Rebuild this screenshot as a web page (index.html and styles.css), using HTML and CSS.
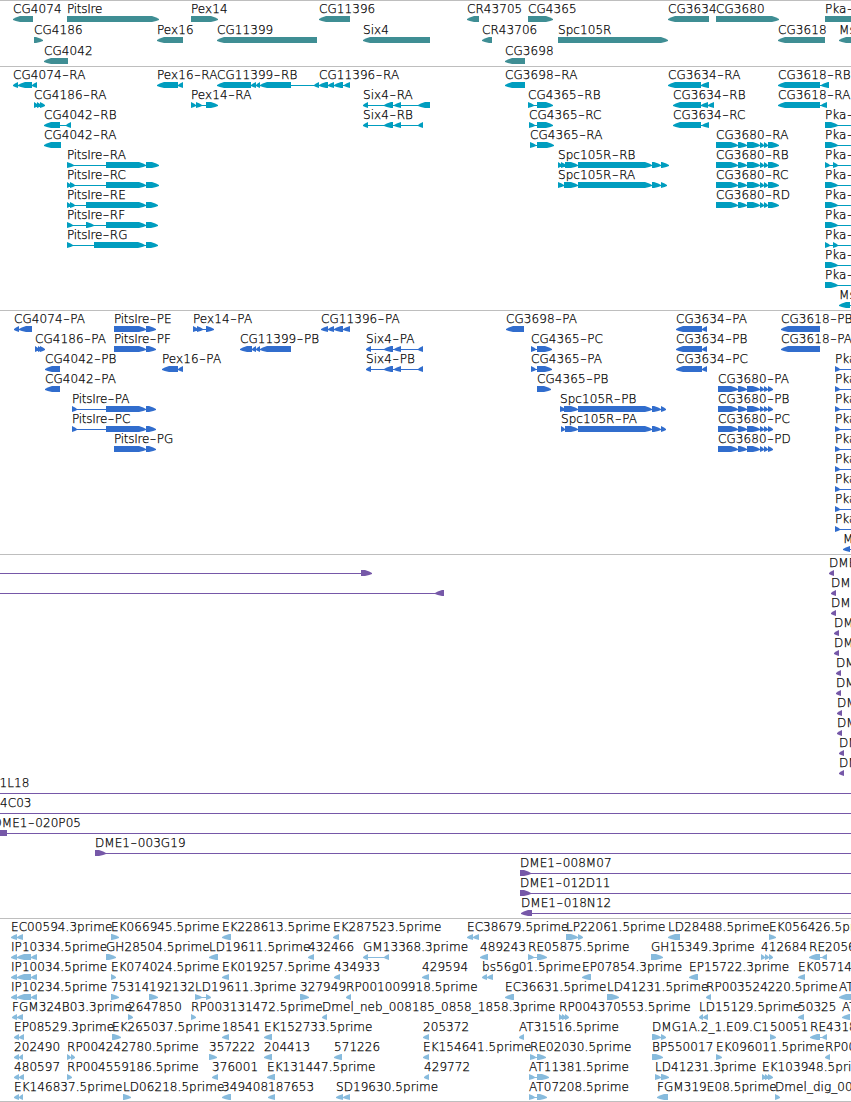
FILE: index.html
```
<!DOCTYPE html>
<html>
<head>
  <meta charset="utf-8">
  <title>Genome Browser</title>
  <link rel="stylesheet" href="styles.css">
</head>
<body>
  <div class="browser">
    <section class="track genes" id="genes"></section>
    <section class="track transcripts" id="transcripts"></section>
    <section class="track proteins" id="proteins"></section>
    <section class="track bacs" id="bacs"></section>
    <section class="track ests" id="ests"></section>
  </div>
  <script src="tracks.js"></script>
</body>
</html>
```
FILE: styles.css
```
body {
  margin: 0;
  background: #fff;
}

.browser {
  width: 851px;
  height: 1102px;
  overflow: hidden;
}

.track {
  border-top: 1px solid #bebebe;
  overflow: hidden;
}

.track svg {
  display: block;
  width: 100%;
  height: 100%;
}

.track text {
  font-family: "DejaVu Sans", sans-serif;
  font-size: 12px;
  font-weight: 200;
  letter-spacing: 0.06px;
  fill: #000;
  stroke: #000;
  stroke-width: 0.25px;
}

.track .narrow {
  letter-spacing: -0.25px;
}

.track .dash {
  letter-spacing: 0.9px;
}

.genes {
  height: 65px;
  color: #3f8e94;
}

.transcripts {
  height: 243px;
  color: #009dbf;
}

.proteins {
  height: 243px;
  color: #316dcd;
}

.bacs {
  height: 363px;
  color: #7658a8;
}

.ests {
  height: 182px;
  color: #87bbdd;
  border-bottom: 1px solid #bebebe;
}
```
FILE: tracks.js
```
// one line per row, features separated by ";"
// name strand blocks [label x]
const tracks = {
  genes: `
CG4074 < 13-33; PitsIre > 67-159; Pex14 > 191-218; CG11396 < 319-350; CR43705 < 467-479; CG4365 > 528-553; CG3634 < 668-709; CG3680 > 716-779; Pka-C3 > 825-900
CG4186 > 34-43; Pex16 < 157-183; CG11399 < 217-317; Six4 < 363-430; CR43706 < 482-492; Spc105R > 558-668; CG3618 < 778-825; Msr < 839-900
CG4042 < 44-68; CG3698 < 505-525`,

  transcripts: `
CG4074-RA < 13-18,18-32,32-37; Pex16-RA < 157-178,178-183; CG11399-RB < 217-251,251-256,256-260,260-291,314-319; CG11396-RA < 319-328,328-334,334-343,344-350; CG3698-RA < 505-525; CG3634-RA < 668-701,701-709; CG3618-RB < 778-820,821-829
CG4186-RA > 34-38,37-41,40-45; Pex14-RA > 191-196,196-202,206-218; Six4-RA < 363-368,384-393,394-401,418-430; CG4365-RB > 528-534,537-553; CG3634-RB < 673-701,701-708,708-714; CG3618-RA < 778-820,821-827
CG4042-RB < 44-60,66-71; Six4-RB < 363-368,384-393,394-401,418-423; CG4365-RC > 529-535,537-553; CG3634-RC < 673-701,702-709; Pka-C3-RA > 825-838,880-900
CG4042-RA < 44-61; CG4365-RA > 530-536,537-554; CG3680-RA > 716-738,738-747,747-760,760-764,764-768,768-779; Pka-C3-RB > 825-838,880-900
PitsIre-RA > 67-74,106-146,146-159; Spc105R-RB > 558-562,561-566,565-578,578-652,652-661,661-669; CG3680-RB > 716-738,738-747,747-760,760-764,764-768,768-779; Pka-C3-RC > 825-830,833-838,880-900
PitsIre-RC > 67-71,70-75,106-146,146-159; Spc105R-RA > 558-564,564-578,578-652,652-661,661-667; CG3680-RC > 716-738,738-747,747-760,760-764,764-768,768-779; Pka-C3-RD > 825-838,880-900
PitsIre-RE > 67-71,70-75,86-146,146-158; CG3680-RD > 716-738,738-747,747-760,760-764,764-768,768-779; Pka-C3-RE > 825-838,880-900
PitsIre-RF > 67-73,86-94,106-146,146-158; Pka-C3-RF > 825-838,880-900
PitsIre-RG > 67-73,94-145,146-158; Pka-C3-RG > 825-830,833-838,880-900
Pka-C3-RH > 825-838,880-900
Pka-C3-RI > 825-838,880-900
Msr-RA < 839-850,880-900`,

  proteins: `
CG4074-PA < 14-19,19-32; PitsIre-PE > 114-146,146-156; Pex14-PA > 193-198,197-203,206-214; CG11396-PA < 321-328,328-334,334-343,343-350; CG3698-PA < 506-524; CG3634-PA < 676-702,702-707; CG3618-PB < 781-820
CG4186-PA > 35-39,38-42,40-45; PitsIre-PF > 114-146,146-156; CG11399-PB < 240-252,252-256,256-260,260-291; Six4-PA < 366-371,384-393,394-401,418-423; CG4365-PC > 531-536,537-552; CG3634-PB < 676-702,702-707; CG3618-PA < 781-820
CG4042-PB < 45-60; Pex16-PA < 162-178,178-183; Six4-PB < 366-371,384-393,394-401,418-423; CG4365-PA > 531-536,537-552; CG3634-PC < 676-702,702-707; Pka-C3-PA > 835-840,880-900
CG4042-PA < 45-60; CG4365-PB > 537-551; CG3680-PA > 718-738,738-747,747-760,760-764,764-768,768-773; Pka-C3-PB > 835-840,880-900
PitsIre-PA > 72-77,106-146,146-156; Spc105R-PB > 560-565,564-578,578-652,652-661,661-666; CG3680-PB > 718-738,738-747,747-760,760-764,764-768,768-773; Pka-C3-PC > 835-840,880-900
PitsIre-PC > 72-77,106-146,146-156; Spc105R-PA > 561-565,565-578,578-652,652-661,661-666; CG3680-PC > 718-738,738-747,747-760,760-764,764-768,768-773; Pka-C3-PD > 835-840,880-900
PitsIre-PG > 114-146,146-156; CG3680-PD > 718-738,738-747,747-760,760-764,764-768,768-773; Pka-C3-PE > 835-840,880-900
Pka-C3-PF > 835-840,880-900
Pka-C3-PG > 835-840,880-900
Pka-C3-PH > 835-840,880-900
Pka-C3-PI > 835-840,880-900
Msr-PA < 843-850,880-900`,

  bacs: `
- > -40--30,361-372; DME1 < 829-834
- < -40--30,435-444; DME1 < 831-836
DME1 < 831-836
DME1 < 834-839
DME1 < 834-839
DME1 < 836-841
DME1 < 836-841
DME1 < 837-842
DME1 < 837-842
DME1 < 839-844
DME1 < 839-844
1L18 > -40--30,880-900 -0.5
4C03 > -40--30,880-900 0
DME1-020P05 < -9-7,880-900 -7.5
DME1-003G19 > 95-106,880-900
DME1-008M07 > 520-531,880-900
DME1-012D11 > 520-531,880-900
DME1-018N12 < 521-532,880-900`,

  ests: `
EC00594.3prime < 11-17,17-23; EK066945.5prime > 111-119; EK228613.5prime < 222-231; EK287523.5prime < 333-339; EC38679.5prime < 467-473,473-479; LP22061.5prime > 566-578,578-583; LD28488.5prime < 668-680; EK056426.5prime > 769-776
IP10334.5prime < 11-17,17-31,31-37; GH28504.5prime > 106-116; LD19611.5prime < 209-218; 432466 < 308-314; GM13368.3prime < 363-368,384-389; 489243 < 480-488; RE05875.5prime > 528-534,537-547; GH15349.3prime > 651-663; 412684 > 761-765,765-769,769-773; RE20567.5prime < 809-820,822-827
IP10034.5prime < 11-17,17-31,31-37; EK074024.5prime > 111-116; EK019257.5prime < 222-229; 434933 < 334-340; 429594 < 422-429; bs56g01.5prime < 482-487,487-493; EP07854.3prime < 582-591; EP15722.3prime < 689-698; EK057140.5prime < 798-805
IP10234.5prime < 11-17,17-31,31-37; 75314 > 111-119; 192132 > 149-158; LD19611.3prime > 195-202,206-211; 327949 > 300-309; RP001009918.5prime < 346-351; EC36631.5prime < 505-514; LD41231.5prime > 607-619; RP003524220.5prime < 706-711; AT12345.5prime < 839-860
FGM324B03.3prime < 12-17,17-23; 2647850 > 128-133; RP003131472.5prime > 191-196; Dmel_neb_008185_0858_1858.3prime < 322-327; RP004370553.5prime > 559-563,562-566,565-569; LD15129.5prime < 699-703,703-708; 50325 < 798-804; AT04522.5prime < 842-850
EP08529.3prime < 14-19,19-24; EK265037.5prime > 112-121; 18541 < 222-229; EK152733.5prime < 264-272; 205372 < 423-429; AT31516.5prime < 519-524; DMG1A.2_1.E09.C1 > 652-661,661-666; 50051 > 770-776; RE43181.5prime < 810-820,822-827
202490 < 14-19,19-23; RP004242780.5prime > 67-71,71-75; 357222 > 209-217; 204413 < 264-272; 571226 < 334-342; EK154641.5prime < 423-429; RE02030.5prime > 530-536,537-546; BP550017 > 652-663; EK096011.5prime > 716-722; RP003812.5prime < 825-830
480597 < 14-19,19-24; RP004559186.5prime > 67-72; 376001 < 212-218; EK131447.5prime < 267-275; 429772 < 424-429; AT11381.5prime > 529-535,537-549; LD41231.3prime > 655-661,661-669; EK103948.5prime > 762-766,765-769,768-773
EK146837.5prime < 14-19,19-23; LD06218.5prime > 123-131; 349408 < 222-231; 187653 < 268-275; SD19630.5prime < 336-343,343-350; AT07208.5prime > 529-535,537-547; FGM319E08.5prime < 657-668; Dmel_dig_0008 > 775-780`
};

const BAR_TOP = 15;
const HEAD = 7;

// the shoulder of the head is cut at one pixel, then it runs to the tip
function block(a, b, strand, y) {
  const head = Math.min(HEAD, b - a);
  const [base, tip, dir] = strand === '>' ? [a, b, 1] : [b, a, -1];
  const neck = tip - dir * head;
  return `M${base} ${y}H${neck}L${neck + dir * head * 0.6} ${y + 1.5}L${tip} ${y + 3}V${y + 4}` +
    `L${neck + dir * head * 0.6} ${y + 5}L${neck} ${y + 6}H${base}Z`;
}

function label(name) {
  return name
    .replace('PitsIre', '<tspan class="narrow">PitsIre</tspan>')
    .replace(/-/g, '<tspan class="dash" dx="0.8">–</tspan>');
}

function feature(src, top) {
  const [name, strand, spans, labelX] = src.trim().split(' ');
  const y = top + BAR_TOP;
  const blocks = spans.split(',').map(s => s.match(/^(-?\d+)-(-?\d+)$/).slice(1).map(Number));
  const start = blocks[0][0];
  const end = blocks[blocks.length - 1][1];
  let out = '';
  if (blocks.length > 1) {
    out += `<rect x="${start}" y="${y + 3}" width="${end - start}" height="1" fill="currentColor"/>`;
  }
  out += `<path fill="currentColor" d="${blocks.map(b => block(b[0], b[1], strand, y)).join('')}"/>`;
  if (name !== '-') {
    const x = labelX === undefined ? start : Number(labelX);
    out += `<text x="${x}" y="${top + 12}">${label(name)}</text>`;
  }
  return out;
}

for (const id in tracks) {
  const pitch = id === 'genes' ? 21 : 20;
  const rows = tracks[id].trim().split('\n');
  document.getElementById(id).innerHTML = '<svg>' +
    rows.map((row, i) => row.split(';').map(f => feature(f, i * pitch)).join('')).join('') +
    '</svg>';
}
```
